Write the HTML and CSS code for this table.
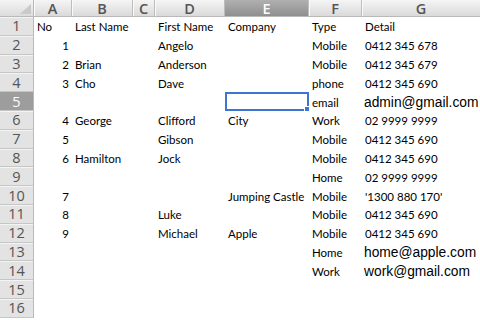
FILE: index.html
```html
<!DOCTYPE html>
<html>
<head>
<meta charset="utf-8">
<link rel="stylesheet" href="styles.css">
</head>
<body>
<div class="sheet">
  <div class="corner"><span class="tri"></span></div>
  <div class="ch">A</div><div class="ch">B</div><div class="ch">C</div><div class="ch">D</div><div class="ch sel">E</div><div class="ch">F</div><div class="ch last">G</div>

  <div class="rh">1</div><div class="c">No</div><div class="c">Last Name</div><div class="c"></div><div class="c">First Name</div><div class="c">Company</div><div class="c">Type</div><div class="c">Detail</div>
  <div class="rh">2</div><div class="c n">1</div><div class="c"></div><div class="c"></div><div class="c">Angelo</div><div class="c"></div><div class="c">Mobile</div><div class="c">0412 345 678</div>
  <div class="rh">3</div><div class="c n">2</div><div class="c">Brian</div><div class="c"></div><div class="c">Anderson</div><div class="c"></div><div class="c">Mobile</div><div class="c">0412 345 679</div>
  <div class="rh">4</div><div class="c n">3</div><div class="c">Cho</div><div class="c"></div><div class="c">Dave</div><div class="c"></div><div class="c">phone</div><div class="c">0412 345 690</div>
  <div class="rh sel">5</div><div class="c"></div><div class="c"></div><div class="c"></div><div class="c"></div><div class="c active"><span class="handle"></span></div><div class="c">email</div><div class="c mail">admin@gmail.com</div>
  <div class="rh">6</div><div class="c n">4</div><div class="c">George</div><div class="c"></div><div class="c">Clifford</div><div class="c">City</div><div class="c">Work</div><div class="c">02 9999 9999</div>
  <div class="rh">7</div><div class="c n">5</div><div class="c"></div><div class="c"></div><div class="c">Gibson</div><div class="c"></div><div class="c">Mobile</div><div class="c">0412 345 690</div>
  <div class="rh">8</div><div class="c n">6</div><div class="c">Hamilton</div><div class="c"></div><div class="c">Jock</div><div class="c"></div><div class="c">Mobile</div><div class="c">0412 345 690</div>
  <div class="rh">9</div><div class="c"></div><div class="c"></div><div class="c"></div><div class="c"></div><div class="c"></div><div class="c">Home</div><div class="c">02 9999 9999</div>
  <div class="rh">10</div><div class="c n">7</div><div class="c"></div><div class="c"></div><div class="c"></div><div class="c">Jumping Castle</div><div class="c">Mobile</div><div class="c">'1300 880 170'</div>
  <div class="rh">11</div><div class="c n">8</div><div class="c"></div><div class="c"></div><div class="c">Luke</div><div class="c"></div><div class="c">Mobile</div><div class="c">0412 345 690</div>
  <div class="rh">12</div><div class="c n">9</div><div class="c"></div><div class="c"></div><div class="c">Michael</div><div class="c">Apple</div><div class="c">Mobile</div><div class="c">0412 345 690</div>
  <div class="rh">13</div><div class="c"></div><div class="c"></div><div class="c"></div><div class="c"></div><div class="c"></div><div class="c">Home</div><div class="c mail">home@apple.com</div>
  <div class="rh">14</div><div class="c"></div><div class="c"></div><div class="c"></div><div class="c"></div><div class="c"></div><div class="c">Work</div><div class="c mail">work@gmail.com</div>
  <div class="rh">15</div><div class="c"></div><div class="c"></div><div class="c"></div><div class="c"></div><div class="c"></div><div class="c"></div><div class="c"></div>
  <div class="rh">16</div><div class="c"></div><div class="c"></div><div class="c"></div><div class="c"></div><div class="c"></div><div class="c"></div><div class="c"></div>
</div>
</body>
</html>
```
FILE: styles.css
```css
html, body {
  margin: 0;
  padding: 0;
  background: #ffffff;
  overflow: hidden;
}
.sheet {
  width: 480px;
  height: 320px;
  display: grid;
  grid-template-columns: 34px 38px 61px 22px 70px 84px 53px 118px;
  grid-template-rows: 17px repeat(16, 18.8px) 1fr;
  font-family: Lato, "Open Sans", sans-serif;
  font-size: 11.5px;
  color: #000;
}
.corner {
  position: relative;
  background: linear-gradient(#f4f4f4, #dcdcdc);
  border-right: 1px solid #b9b9b9;
  border-bottom: 1px solid #b9b9b9;
  box-sizing: border-box;
}
.tri {
  position: absolute;
  right: 2px;
  bottom: 2px;
  width: 0;
  height: 0;
  border-left: 11px solid transparent;
  border-bottom: 10px solid #c9c9c9;
}
.ch {
  display: flex;
  align-items: center;
  justify-content: center;
  background: linear-gradient(#f5f5f5, #dadada);
  border-right: 1px solid #bdbdbd;
  border-bottom: 1px solid #b9b9b9;
  box-shadow: inset 1px 0 0 #fafafa;
  box-sizing: border-box;
  color: #555;
  font-size: 14.5px;
  font-weight: 600;
  font-family: "Open Sans", Lato, sans-serif;
}
.ch.last { border-right: none; }
.ch.sel {
  background: linear-gradient(#b0b0b0, #8f8f8f);
  color: #fdfdfd;
  box-shadow: none;
}
.rh {
  display: flex;
  align-items: center;
  justify-content: center;
  background: #e3e3e3;
  border-right: 1px solid #b9b9b9;
  border-bottom: 1px solid #c6c6c6;
  box-shadow: inset 0 1px 0 #f4f4f4;
  box-sizing: border-box;
  color: #555;
  font-size: 14.5px;
  font-family: "Open Sans", Lato, sans-serif;
}
.rh.sel {
  background: #9d9d9d;
  color: #fdfdfd;
  box-shadow: none;
}
.c {
  display: flex;
  align-items: center;
  padding: 1px 2px 0 3px;
  white-space: nowrap;
  overflow: visible;
  min-width: 0;
  position: relative;
}
.c.n {
  justify-content: flex-end;
  padding-right: 3px;
}
.c.mail {
  font-family: "Liberation Sans", Arial, sans-serif;
  font-size: 13.8px;
  padding-left: 2px;
}
.c.active {
  border: 2px solid #3f74d2;
  box-sizing: border-box;
}
.handle {
  position: absolute;
  right: -3px;
  bottom: -3px;
  width: 4px;
  height: 4px;
  background: #3f74d2;
  border: 1px solid #ffffff;
}
```
